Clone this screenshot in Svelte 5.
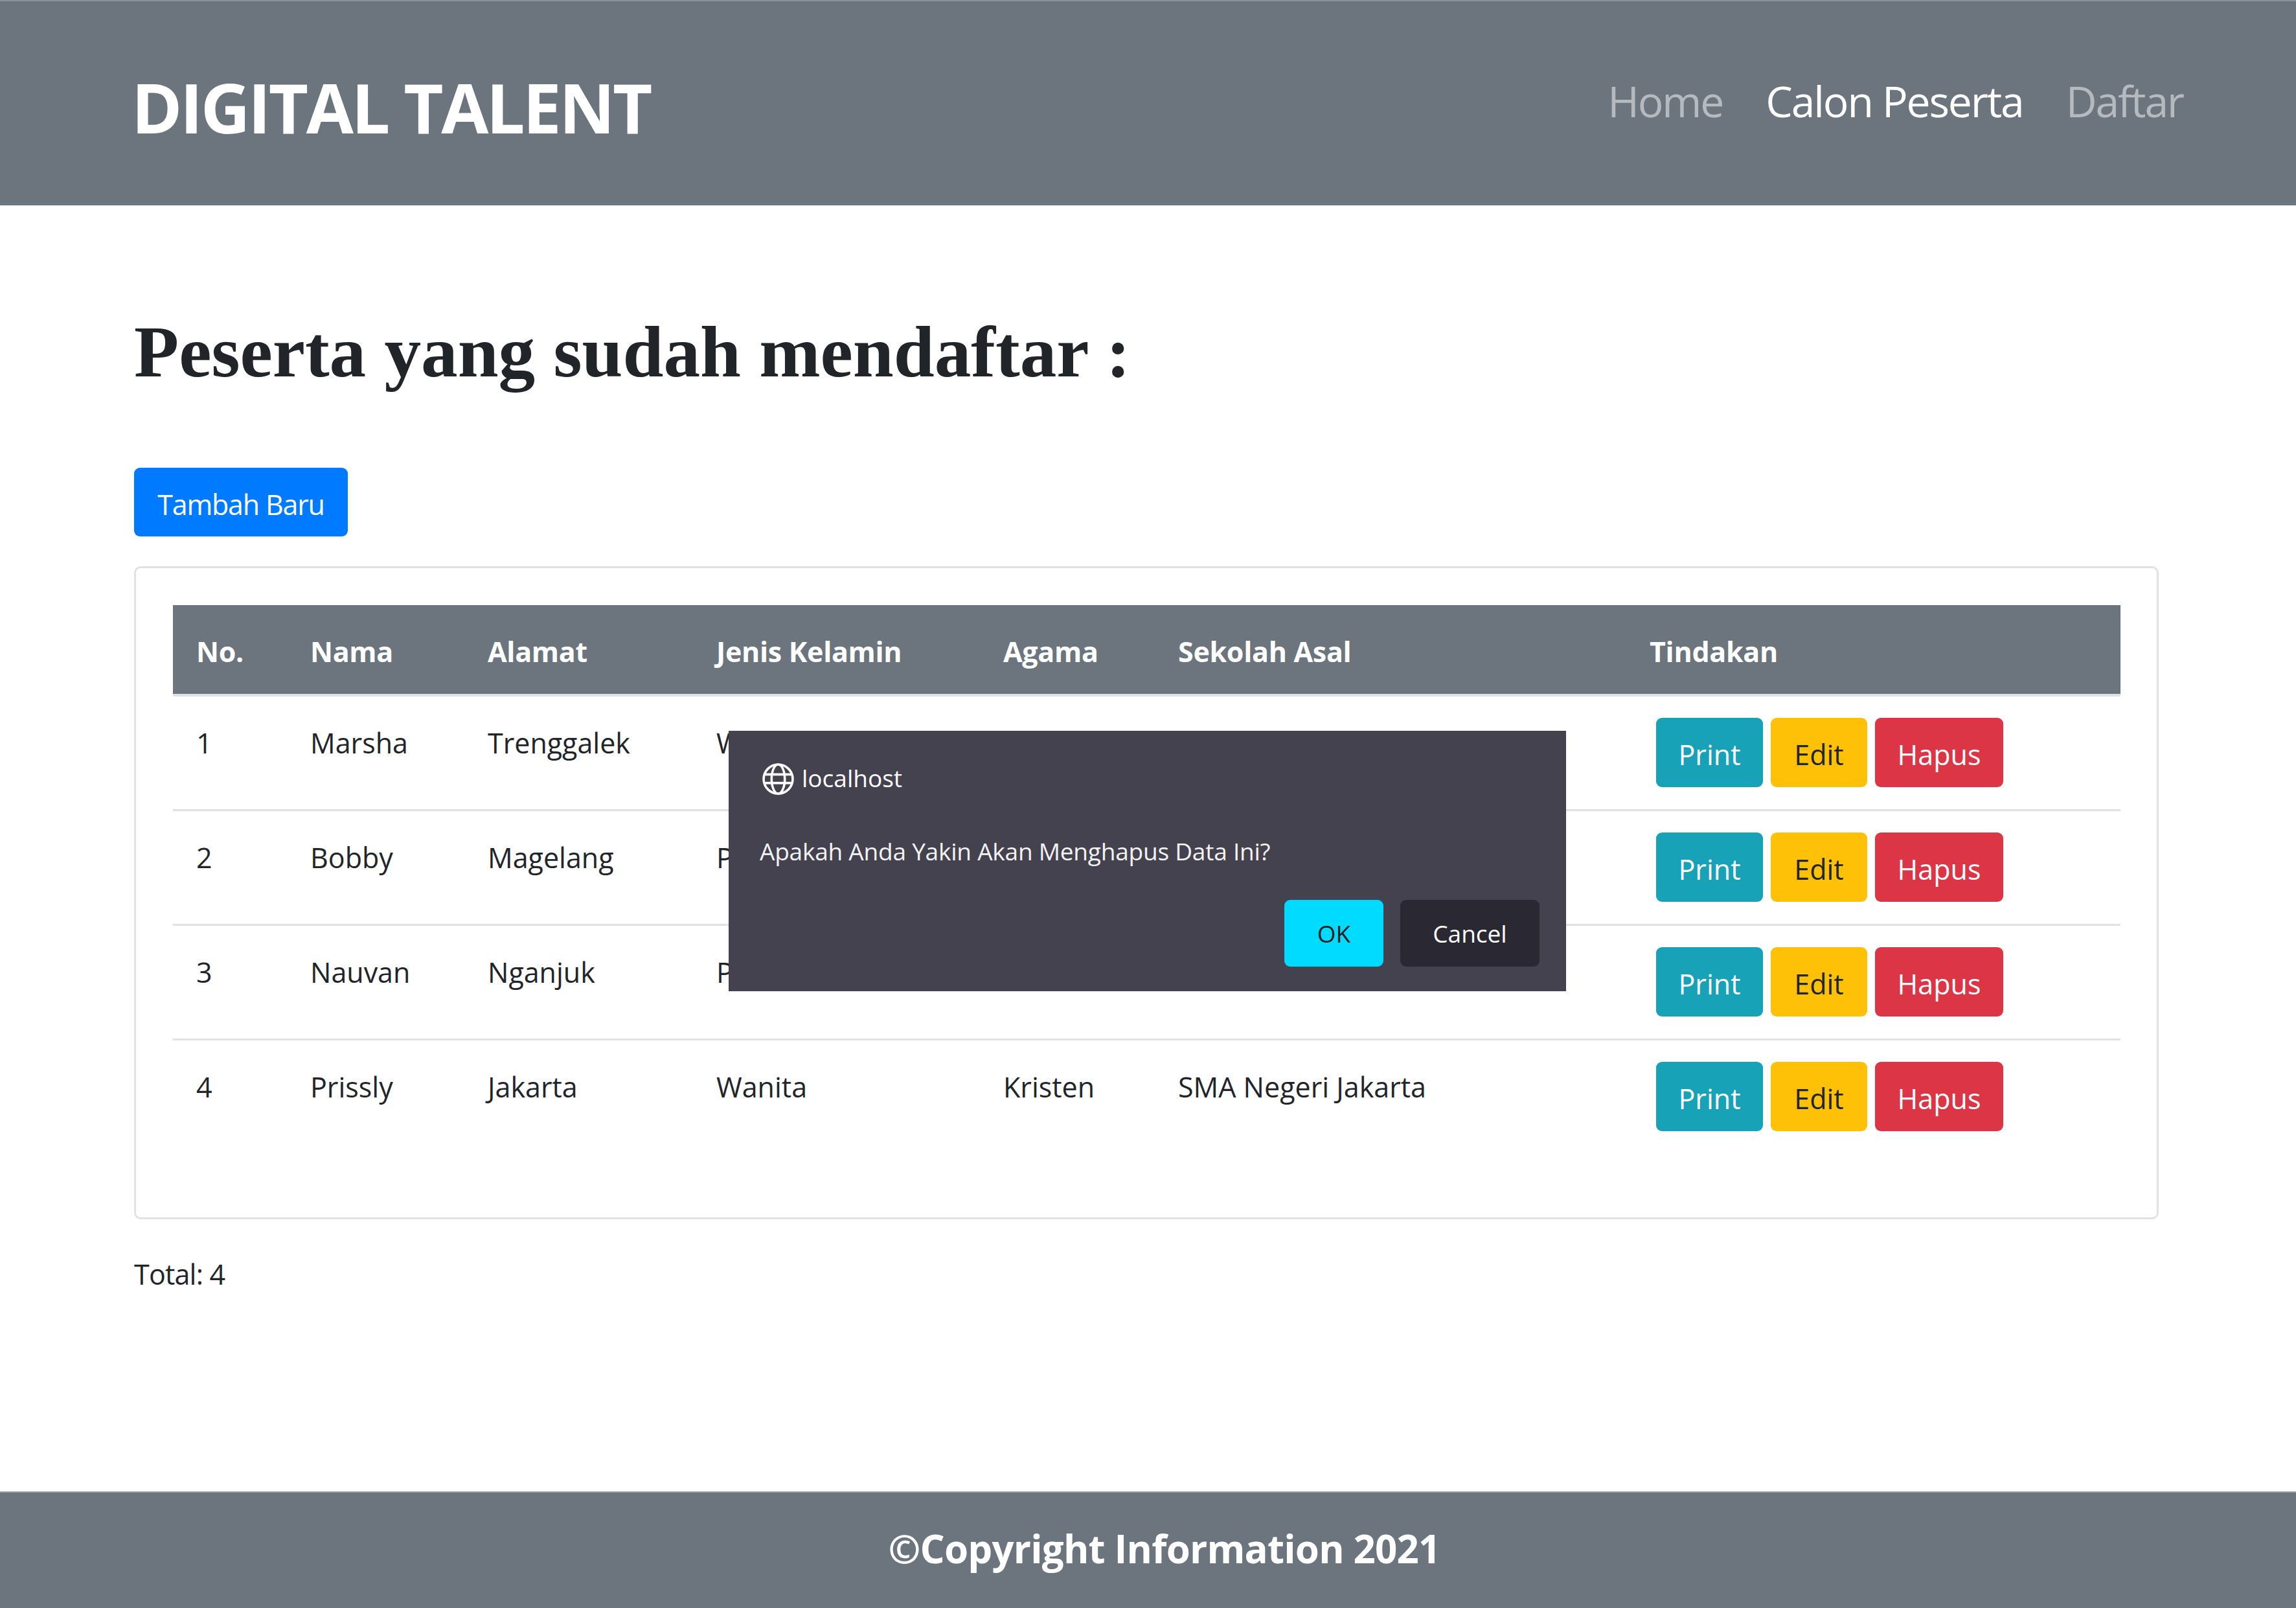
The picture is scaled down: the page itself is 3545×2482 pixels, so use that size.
<script>
  const rows = [
    { no: 1, nama: 'Marsha', alamat: 'Trenggalek', jk: 'Wanita', agama: '', sekolah: '' },
    { no: 2, nama: 'Bobby', alamat: 'Magelang', jk: 'Pria', agama: '', sekolah: '' },
    { no: 3, nama: 'Nauvan', alamat: 'Nganjuk', jk: 'Pria', agama: '', sekolah: '' },
    { no: 4, nama: 'Prissly', alamat: 'Jakarta', jk: 'Wanita', agama: 'Kristen', sekolah: 'SMA Negeri Jakarta' }
  ];
  const heads = ['No.', 'Nama', 'Alamat', 'Jenis Kelamin', 'Agama', 'Sekolah Asal', 'Tindakan'];
</script>

<div class="page">
  <header class="navbar">
    <a class="brand" href="#top">DIGITAL TALENT</a>
    <nav class="links">
      <a href="#home">Home</a>
      <a class="active" href="#calon">Calon Peserta</a>
      <a href="#daftar">Daftar</a>
    </nav>
  </header>

  <main class="main">
    <h1>Peserta yang sudah mendaftar :</h1>
    <button class="btn primary add">Tambah Baru</button>
    <section class="card">
      <table>
        <colgroup>
          <col class="c1" /><col class="c2" /><col class="c3" /><col class="c4" /><col class="c5" /><col class="c6" /><col class="c7" />
        </colgroup>
        <thead>
          <tr>{#each heads as h}<th>{h}</th>{/each}</tr>
        </thead>
        <tbody>
          {#each rows as r}
            <tr>
              <td>{r.no}</td><td>{r.nama}</td><td>{r.alamat}</td><td>{r.jk}</td><td>{r.agama}</td><td>{r.sekolah}</td>
              <td class="actions">
                <div class="group">
                  <button class="btn print">Print</button>
                  <button class="btn edit">Edit</button>
                  <button class="btn hapus">Hapus</button>
                </div>
              </td>
            </tr>
          {/each}
        </tbody>
      </table>
    </section>
    <p class="total">Total: 4</p>
  </main>

  <footer class="footer">©Copyright Information 2021</footer>

  <div class="dialog" role="dialog">
    <div class="origin">
      <svg class="globe" viewBox="0 0 48 48" fill="none" stroke="currentColor" stroke-width="3.5">
        <circle cx="24" cy="24" r="22" />
        <ellipse cx="24" cy="24" rx="10" ry="22" />
        <path d="M4 17H44M4 30H44" />
      </svg>
      <span>localhost</span>
    </div>
    <p class="msg">Apakah Anda Yakin Akan Menghapus Data Ini?</p>
    <div class="dlg-actions">
      <button class="dbtn ok">OK</button>
      <button class="dbtn cancel">Cancel</button>
    </div>
  </div>
</div>

<style>
  :global(body) {
    margin: 0;
    background: #fff;
  }
  .page {
    position: relative;
    display: flex;
    flex-direction: column;
    min-height: 2482px;
    font-family: "Open Sans", "Noto Sans", sans-serif;
    font-stretch: 88%;
    font-size: 43px;
    color: #212529;
  }
  .navbar {
    height: 317px;
    box-sizing: border-box;
    background: #6c757d;
    border-top: 2px solid #8b939a;
    display: flex;
    justify-content: space-between;
    padding: 93px 174px 0 203px;
  }
  .brand {
    color: #fff;
    font-size: 106px;
    font-weight: 700;
    letter-spacing: -3.4px;
    line-height: 140px;
    text-decoration: none;
  }
  .links {
    display: flex;
    gap: 66px;
    font-size: 66px;
    letter-spacing: -2.1px;
    line-height: 88px;
    margin-top: 16px;
  }
  .links a {
    color: rgba(255, 255, 255, 0.5);
    text-decoration: none;
  }
  .links a.active {
    color: #fff;
  }
  .main {
    flex: 1;
    padding: 0 212px 0 207px;
  }
  h1 {
    margin: 157px 0 0;
    font-family: "Liberation Serif", serif;
    font-stretch: normal;
    font-weight: 700;
    font-size: 113.2px;
    line-height: 138px;
  }
  .btn {
    font: inherit;
    font-stretch: inherit;
    height: 107px;
    padding: 6px 0 0;
    border: 0;
    border-radius: 9px;
    color: #fff;
    cursor: pointer;
  }
  .primary {
    background: #007bff;
  }
  .add {
    display: block;
    margin-top: 110px;
    width: 330px;
    height: 106px;
    letter-spacing: -1.2px;
  }
  .card {
    margin-top: 46px;
    height: 1008px;
    box-sizing: border-box;
    border: 3px solid #dfe3e6;
    border-radius: 10px;
    padding: 57px 56px 0 57px;
  }
  table {
    width: 100%;
    table-layout: fixed;
    border-collapse: collapse;
  }
  .c1 { width: 176px; }
  .c2 { width: 274px; }
  .c3 { width: 353px; }
  .c4 { width: 443px; }
  .c5 { width: 270px; }
  .c6 { width: 728px; }
  th {
    height: 139px;
    background: #6c757d;
    color: #fff;
    font-weight: 700;
    letter-spacing: -0.3px;
    text-align: left;
    padding: 5px 0 0 36px;
    border-bottom: 4px solid #dee2e6;
    box-sizing: border-box;
  }
  td {
    height: 177px;
    box-sizing: border-box;
    vertical-align: top;
    padding: 38px 0 0 36px;
    line-height: 67px;
    border-bottom: 3px solid #dee2e6;
  }
  tbody tr:last-child td {
    border-bottom: 0;
  }
  td.actions {
    padding: 33px 0 0 46px;
  }
  .group {
    display: flex;
    gap: 12px;
  }
  .print { background: #17a2b8; width: 165px; }
  .edit { background: #ffc107; color: #212529; width: 149px; }
  .hapus { background: #dc3545; width: 198px; }
  .total {
    margin: 51px 0 0;
    line-height: 67px;
    letter-spacing: -0.8px;
  }
  .footer {
    height: 180px;
    box-sizing: border-box;
    background: #6c757d;
    border-top: 2px solid #98a0a6;
    color: #fff;
    font-size: 60px;
    font-weight: 700;
    letter-spacing: -0.8px;
    text-align: center;
    line-height: 172px;
    padding-left: 50px;
  }
  .dialog {
    position: absolute;
    left: 1125px;
    top: 1128px;
    width: 1293px;
    height: 402px;
    box-sizing: border-box;
    background: #44424e;
    padding: 45px 41px 0 48px;
    color: #fff;
    font-size: 37px;
  }
  .origin {
    display: flex;
    align-items: center;
    gap: 12px;
    padding-left: 4px;
    height: 54px;
  }
  .globe {
    width: 49px;
    height: 49px;
    margin-top: 4px;
  }
  .msg {
    margin: 59px 0 0;
    line-height: 56px;
    letter-spacing: -0.22px;
    color: #f3f3f4;
  }
  .dlg-actions {
    display: flex;
    justify-content: flex-end;
    gap: 26px;
    margin-top: 47px;
  }
  .dbtn {
    font: inherit;
    font-stretch: inherit;
    height: 103px;
    border: 0;
    border-radius: 9px;
    padding: 0;
  }
  .ok {
    width: 153px;
    background: #00dbff;
    color: #1b1b21;
  }
  .cancel {
    width: 215px;
    background: #2a2933;
    color: #fff;
  }
</style>
